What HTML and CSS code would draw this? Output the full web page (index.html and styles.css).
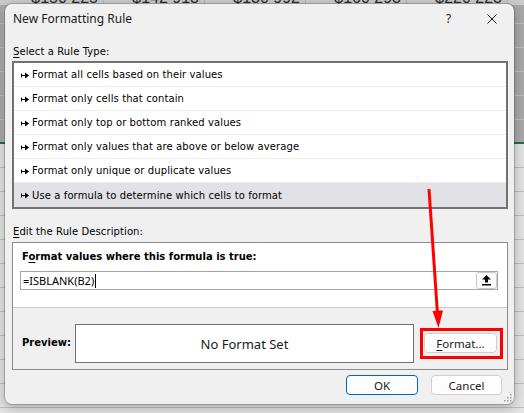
FILE: index.html
```html
<!DOCTYPE html>
<html>
<head>
<meta charset="utf-8">
<title>New Formatting Rule</title>
<link rel="stylesheet" href="styles.css">
</head>
<body>
<div class="sheet">
  <div class="sheet-row">
    <span class="cell">$150 225</span>
    <span class="cell">$142 913</span>
    <span class="cell">$130 992</span>
    <span class="cell">$160 293</span>
    <span class="cell">$220 223</span>
  </div>
</div>

<div class="dialog">
  <div class="titlebar">
    <span class="title">New Formatting Rule</span>
    <span class="help">?</span>
    <span class="close"><svg width="10" height="10" viewBox="0 0 10 10"><path d="M0.5 0.5 L9.5 9.5 M9.5 0.5 L0.5 9.5" stroke="#1b1b1b" stroke-width="1" fill="none"/></svg></span>
  </div>

  <div class="section-label"><u>S</u>elect a Rule Type:</div>
  <ul class="rules">
    <li><svg class="bullet" width="8" height="7" viewBox="0 0 8 7"><rect x="0" y="1.5" width="1" height="4" fill="#000"/><rect x="0" y="3" width="4.5" height="1" fill="#000"/><path d="M4 0.5 L8 3.5 L4 6.5 Z" fill="#000"/></svg>Format all cells based on their values</li>
    <li><svg class="bullet" width="8" height="7" viewBox="0 0 8 7"><rect x="0" y="1.5" width="1" height="4" fill="#000"/><rect x="0" y="3" width="4.5" height="1" fill="#000"/><path d="M4 0.5 L8 3.5 L4 6.5 Z" fill="#000"/></svg>Format only cells that contain</li>
    <li><svg class="bullet" width="8" height="7" viewBox="0 0 8 7"><rect x="0" y="1.5" width="1" height="4" fill="#000"/><rect x="0" y="3" width="4.5" height="1" fill="#000"/><path d="M4 0.5 L8 3.5 L4 6.5 Z" fill="#000"/></svg>Format only top or bottom ranked values</li>
    <li><svg class="bullet" width="8" height="7" viewBox="0 0 8 7"><rect x="0" y="1.5" width="1" height="4" fill="#000"/><rect x="0" y="3" width="4.5" height="1" fill="#000"/><path d="M4 0.5 L8 3.5 L4 6.5 Z" fill="#000"/></svg>Format only values that are above or below average</li>
    <li><svg class="bullet" width="8" height="7" viewBox="0 0 8 7"><rect x="0" y="1.5" width="1" height="4" fill="#000"/><rect x="0" y="3" width="4.5" height="1" fill="#000"/><path d="M4 0.5 L8 3.5 L4 6.5 Z" fill="#000"/></svg>Format only unique or duplicate values</li>
    <li class="selected"><svg class="bullet" width="8" height="7" viewBox="0 0 8 7"><rect x="0" y="1.5" width="1" height="4" fill="#000"/><rect x="0" y="3" width="4.5" height="1" fill="#000"/><path d="M4 0.5 L8 3.5 L4 6.5 Z" fill="#000"/></svg>Use a formula to determine which cells to format</li>
  </ul>

  <div class="section-label edit-label"><u>E</u>dit the Rule Description:</div>
  <div class="desc">
    <div class="desc-top">
      <div class="desc-heading">F<u>o</u>rmat values where this formula is true:</div>
      <div class="formula">
        <span class="ftext">=ISBLANK(B2)</span><span class="caret"></span>
        <span class="collapse"><svg width="9" height="11" viewBox="0 0 9 11"><path d="M4.5 0 L9 4.5 L6 4.5 L6 7.5 L3 7.5 L3 4.5 L0 4.5 Z" fill="#000"/><rect x="0" y="9" width="9" height="1.5" fill="#000"/></svg></span>
      </div>
    </div>
    <div class="desc-bottom">
      <span class="preview-label">Preview:</span>
      <div class="preview">No Format Set</div>
      <span class="format-wrap"><span class="btn format"><u>F</u>ormat...</span></span>
    </div>
  </div>

  <div class="actions">
    <span class="btn ok">OK</span>
    <span class="btn cancel">Cancel</span>
  </div>

  <svg class="grip" width="8" height="8" viewBox="0 0 8 8">
    <rect x="6" y="0" width="1.5" height="1.5" fill="#9a9a9a"/>
    <rect x="3" y="3" width="1.5" height="1.5" fill="#9a9a9a"/>
    <rect x="6" y="3" width="1.5" height="1.5" fill="#9a9a9a"/>
    <rect x="0" y="6" width="1.5" height="1.5" fill="#9a9a9a"/>
    <rect x="3" y="6" width="1.5" height="1.5" fill="#9a9a9a"/>
    <rect x="6" y="6" width="1.5" height="1.5" fill="#9a9a9a"/>
  </svg>
</div>

<svg class="annot" width="524" height="413" viewBox="0 0 524 413">
  <line x1="429" y1="189" x2="437.5" y2="314" stroke="#ff0000" stroke-width="3"/>
  <path d="M432.5 311 L443 310.5 L438.5 328 Z" fill="#ff0000"/>
</svg>
</body>
</html>
```

FILE: styles.css
```css
* { box-sizing: border-box; }

html, body {
  margin: 0;
  padding: 0;
}

body {
  width: 524px;
  height: 413px;
  overflow: hidden;
  position: relative;
  font-family: "DejaVu Sans", Verdana, sans-serif;
  color: #000;
}

.sheet {
  width: 524px;
  height: 413px;
  background:
    linear-gradient(#217346, #217346) 0 142px / 100% 2px no-repeat,
    linear-gradient(#bcbcbc, #bcbcbc) 3px 0 / 1px 142px no-repeat,
    linear-gradient(#bcbcbc, #bcbcbc) 507px 0 / 1px 142px no-repeat,
    repeating-linear-gradient(to bottom, transparent 0 23px, #bdbdbd 23px 24px),
    linear-gradient(to bottom, #a8a8a8 0 142px, #e3e3e3 142px);
}

.sheet-row {
  display: flex;
  padding-left: 3px;
  height: 5px;
  overflow: hidden;
  background: #cbcbcb;
}

.cell {
  flex: 0 0 auto;
  width: 101px;
  padding-right: 5px;
  text-align: right;
  font-family: "Liberation Sans", Arial, sans-serif;
  font-size: 16px;
  line-height: 16px;
  margin-top: -10px;
  color: #2a2a2a;
  border-right: 1px solid #b5b5b5;
  height: 16px;
}

.dialog {
  position: absolute;
  left: 5px;
  top: 4px;
  width: 509px;
  height: 400px;
  background: #f0f0f0;
  border-radius: 7px;
  box-shadow: 0 0 0 1px rgba(0,0,0,0.18), 0 3px 12px rgba(0,0,0,0.28);
  padding: 0 11px 0 7px;
}

.titlebar {
  display: flex;
  align-items: center;
  height: 28px;
  margin-left: 1px;
  margin-right: -11px;
  font-family: "Noto Sans", "Open Sans", sans-serif;
}

.title {
  font-size: 12px;
  color: #1a1a1a;
  flex: 1 1 auto;
}

.help {
  font-size: 12px;
  color: #1a1a1a;
  width: 41px;
}

.close {
  display: flex;
  width: 27px;
  margin-top: 2px;
}

.section-label {
  font-size: 10px;
  line-height: 14px;
  height: 14px;
  margin-top: 13px;
  margin-left: 1px;
  letter-spacing: 0.1px;
  color: #000;
}

.section-label u {
  text-decoration-thickness: 1px;
  text-underline-offset: 2px;
}

.rules {
  list-style: none;
  margin: 2px 0 0 0;
  padding: 0;
  width: 496px;
  height: 148px;
  border: 2px solid #727272;
  background: #fff;
}

.rules li {
  display: flex;
  align-items: center;
  height: 24px;
  padding: 1px 0 0 7px;
  border-bottom: 1px solid #ececec;
  font-size: 10px;
  line-height: 14px;
  letter-spacing: 0.1px;
  white-space: nowrap;
}

.rules li:last-child {
  border-bottom: none;
}

.rules li.selected {
  background: #e1e1e6;
}

.bullet {
  flex: 0 0 auto;
  margin-right: 3px;
}

.edit-label {
  margin-top: 16px;
}

.desc {
  margin-top: 3px;
  width: 496px;
  height: 128px;
  border: 1px solid #8a8a8a;
  display: flex;
  flex-direction: column;
}

.desc-top {
  background: #fff;
  height: 65px;
  border-bottom: 1px solid #c8c8c8;
  padding: 7px 9px 0 7px;
}

.desc-heading {
  font-weight: bold;
  font-size: 10px;
  line-height: 14px;
  padding-left: 2px;
}

.desc-heading u {
  text-underline-offset: 2px;
  text-decoration-thickness: 1px;
}

.formula {
  margin-top: 7px;
  height: 19px;
  border: 1px solid #a6a6a6;
  display: flex;
  align-items: center;
  padding-left: 2px;
  background: #fff;
}

.ftext {
  font-family: "Noto Sans", "Open Sans", sans-serif;
  font-size: 11px;
  color: #000;
}

.caret {
  width: 1px;
  height: 14px;
  background: #000;
  margin-left: 1px;
}

.collapse {
  margin-left: auto;
  width: 21px;
  height: 17px;
  border: 1px solid #c9c9c9;
  border-radius: 3px;
  background: #fdfdfd;
  display: flex;
  align-items: center;
  justify-content: center;
}

.desc-bottom {
  flex: 1 1 auto;
  background: #f0f0f0;
  display: flex;
  align-items: flex-start;
  padding: 16px 0 0 9px;
}

.preview-label {
  width: 53px;
  font-weight: bold;
  font-size: 10px;
  line-height: 14px;
  margin-top: 12px;
}

.preview {
  width: 339px;
  height: 39px;
  border: 1px solid #707070;
  background: #fff;
  display: flex;
  align-items: center;
  justify-content: center;
  font-family: "Noto Sans", "Open Sans", sans-serif;
  font-size: 13px;
  color: #1a1a1a;
}

.format-wrap {
  position: relative;
  margin-left: 10px;
  margin-top: 9px;
}

.format-wrap::after {
  content: "";
  position: absolute;
  left: -4px;
  top: -5px;
  right: -6px;
  bottom: -6px;
  border: 3px solid #ff0000;
}

.btn {
  display: flex;
  align-items: center;
  justify-content: center;
  height: 20px;
  border: 1px solid #cfcfcf;
  border-radius: 4px;
  background: #fdfdfd;
  font-family: "Noto Sans", "Open Sans", sans-serif;
  font-size: 11.5px;
  color: #1a1a1a;
}

.btn u {
  text-underline-offset: 2px;
  text-decoration-thickness: 1px;
}

.format {
  width: 73px;
}

.actions {
  display: flex;
  justify-content: flex-end;
  gap: 13px;
  margin-top: 5px;
  margin-right: 1px;
}

.ok {
  width: 72px;
  border-color: #0067c0;
}

.cancel {
  width: 71px;
}

.grip {
  position: absolute;
  right: 2px;
  bottom: 2px;
}

.annot {
  position: absolute;
  left: 0;
  top: 0;
  pointer-events: none;
}
```
